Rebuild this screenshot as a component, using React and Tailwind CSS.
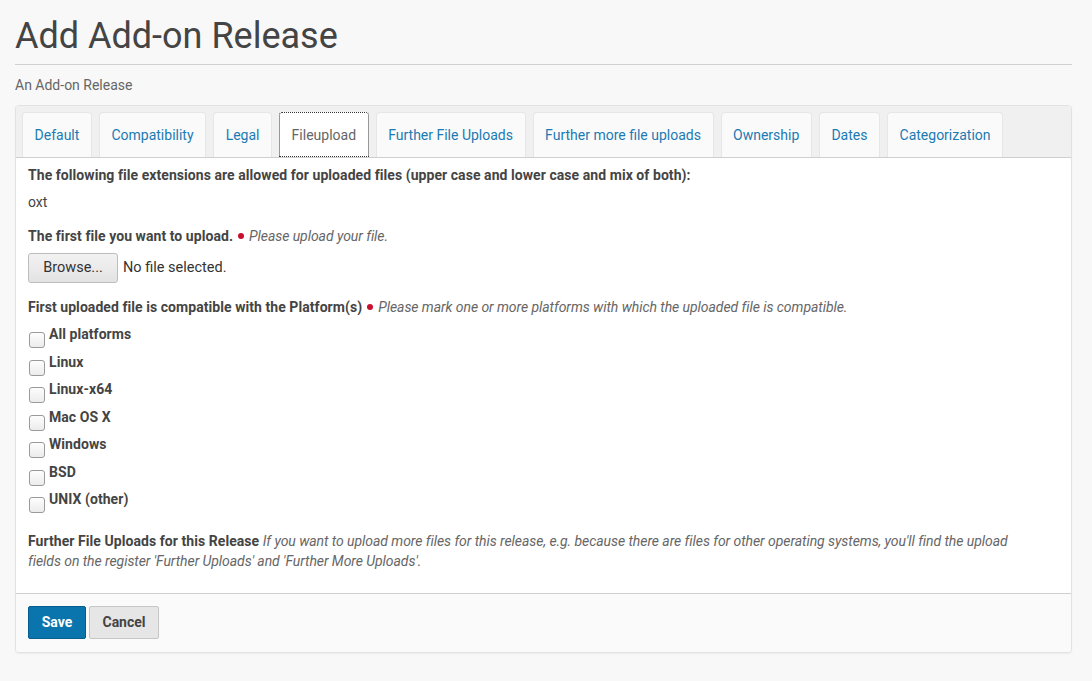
import React from "react";

const tabs = [
  "Default",
  "Compatibility",
  "Legal",
  "Fileupload",
  "Further File Uploads",
  "Further more file uploads",
  "Ownership",
  "Dates",
  "Categorization",
];

const platforms = ["All platforms", "Linux", "Linux-x64", "Mac OS X", "Windows", "BSD", "UNIX (other)"];

function Dot() {
  return <span className="inline-block w-[6px] h-[6px] rounded-full bg-[#c8102e] mx-[5px] align-middle relative top-[-1px]"></span>;
}

export default function App() {
  return (
    <div className="min-h-[681px] bg-[#f8f8f8] text-[#444] text-[14px] leading-[20px]" style={{ fontFamily: "Roboto, 'Noto Sans', sans-serif" }}>
      <div className="pl-[15px] pr-[20px] pt-[14px]">
        <h1 className="text-[36px] leading-[44px] text-[#444] font-normal">Add Add-on Release</h1>
        <div className="border-t border-[#cfcfcf] mt-[6px]"></div>
        <p className="text-[#666] mt-[10px]">An Add-on Release</p>

        <div className="mt-[10px] border border-[#e2e2e2] rounded-[4px] bg-white shadow-[0_1px_2px_rgba(0,0,0,0.05)] overflow-hidden">
          <div className="bg-[#f0f0f0] flex gap-[7px] pl-[6px] pt-[6px] border-b border-[#cfcfcf]">
            {tabs.map((t) =>
              t === "Fileupload" ? (
                <div key={t} className="h-[45px] px-[11.55px] flex items-center bg-white border border-dotted border-[#333] text-[#666] rounded-t-[3px]">
                  {t}
                </div>
              ) : (
                <div key={t} className="h-[45px] px-[11.55px] flex items-center bg-[#fafafa] border border-[#e6e6e6] border-b-0 text-[#1b7ab3] rounded-t-[4px]">
                  {t}
                </div>
              )
            )}
          </div>

          <div className="px-[12px] pt-[7px] pb-[22px]">
            <p className="font-bold tracking-[0.06px]">The following file extensions are allowed for uploaded files (upper case and lower case and mix of both):</p>
            <p className="mt-[7px]">oxt</p>

            <p className="mt-[14px]">
              <span className="font-bold tracking-[0.06px]">The first file you want to upload.</span>
              <Dot />
              <span className="italic text-[#666] tracking-[-0.06px]">Please upload your file.</span>
            </p>
            <div className="flex items-center mt-[7px]">
              <div className="h-[30px] w-[90px] flex items-center justify-center border border-[#bdbdbd] rounded-[3px] bg-gradient-to-b from-[#f2f2f2] to-[#e3e3e3] text-[#333] text-[14.5px]">
                Browse...
              </div>
              <span className="ml-[5px] text-[#333] text-[14.5px]">No file selected.</span>
            </div>

            <p className="mt-[14px]">
              <span className="font-bold tracking-[0.06px]">First uploaded file is compatible with the Platform(s)</span>
              <Dot />
              <span className="italic text-[#666] tracking-[-0.06px]">Please mark one or more platforms with which the uploaded file is compatible.</span>
            </p>
            <div className="mt-[6px] flex flex-col">
              {platforms.map((p) => (
                <div key={p} className="flex items-start h-[27.5px]">
                  <span className="mt-[9px] ml-[1px] w-[16px] h-[16px] rounded-[3px] border border-[#9a9a9a] bg-gradient-to-b from-[#fdfdfd] to-[#ececec] shrink-0"></span>
                  <span className="font-bold tracking-[0.06px] ml-[4px] mt-[1px]">{p}</span>
                </div>
              ))}
            </div>

            <p className="mt-[15px] w-[985px]">
              <span className="font-bold tracking-[0.06px]">Further File Uploads for this Release</span>{" "}
              <span className="italic text-[#666] tracking-[-0.06px]">
                If you want to upload more files for this release, e.g. because there are files for other operating systems, you'll find the upload fields on the register 'Further Uploads' and 'Further More Uploads'.
              </span>
            </p>
          </div>

          <div className="border-t border-[#cfcfcf] bg-[#fafafa] px-[12px] pt-[12px] pb-[13px] flex gap-[3px]">
            <button className="h-[33px] w-[58px] bg-[#0a74ad] border border-[#075d8c] text-white font-bold rounded-[2px]">Save</button>
            <button className="h-[33px] w-[70px] bg-[#e6e6e6] border border-[#c6c6c6] text-[#444] font-bold rounded-[2px]">Cancel</button>
          </div>
        </div>
      </div>
    </div>
  );
}
